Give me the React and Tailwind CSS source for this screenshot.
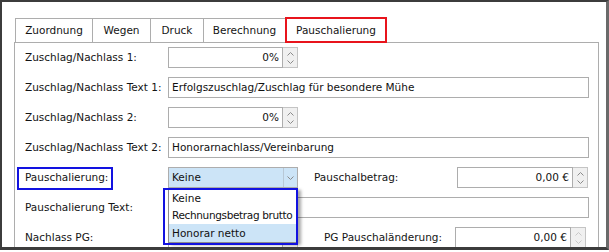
import React from 'react';

const Chevron = ({ dir = 'down', color = '#8a8a8a' }) => (
    <svg width="7" height="4" viewBox="0 0 7 4" className="block">
        <path
            d={dir === 'up' ? 'M0.5 3.5 L3.5 0.5 L6.5 3.5' : 'M0.5 0.5 L3.5 3.5 L6.5 0.5'}
            fill="none"
            stroke={color}
            strokeWidth="1"
        />
    </svg>
);

const Spinner = ({ faded }) => (
    <div className="w-[15px] h-[21px] shrink-0 flex flex-col items-center justify-center gap-[4px] bg-[#f0f0f0] border-y border-r border-[#c4c4c4]">
        <Chevron dir="up" color={faded ? '#c8c8c8' : '#8a8a8a'} />
        <Chevron dir="down" color={faded ? '#c8c8c8' : '#8a8a8a'} />
    </div>
);

const NumberBox = ({ value, width, faded }) => (
    <div className="flex shrink-0">
        <div
            className="h-[21px] border border-[#adadad] bg-white flex items-center justify-end pr-[3px] text-[#111]"
            style={{ width }}
        >
            {value}
        </div>
        <Spinner faded={faded} />
    </div>
);

const TextBox = ({ value = '' }) => (
    <div className="w-[421px] h-[21px] border border-[#adadad] bg-white flex items-center pl-[3px] text-[#111] whitespace-nowrap overflow-hidden">
        {value}
    </div>
);

const Label = ({ children, className = '' }) => (
    <div className={`w-[143px] shrink-0 whitespace-nowrap text-[#141414] ${className}`}>{children}</div>
);

const tabs = [
    { name: 'Zuordnung', w: 'w-[78px]' },
    { name: 'Wegen', w: 'w-[59px]' },
    { name: 'Druck', w: 'w-[54px]' },
    { name: 'Berechnung', w: 'w-[83px]' },
];

export default function App() {
    return (
        <div className="w-[609px] h-[252px] bg-white font-['DejaVu_Sans',sans-serif] text-[10.5px] leading-none">
            <div className="relative w-[609px] h-[250px] border-l-2 border-t-2 border-r-[3px] border-b-[3px] border-l-[#3c3c3c] border-t-[#3c3c3c] border-r-[#6a6a6a] border-b-[#3c3c3c] overflow-hidden pt-[15px] pl-[12px] bg-white">
                {/* tab strip */}
                <div className="flex items-end h-[25px] ml-px">
                    {tabs.map((t, i) => (
                        <div
                            key={t.name}
                            className={`${t.w} h-[24px] ${i > 0 ? '-ml-px' : ''} border border-b-0 border-[#adadad] bg-white flex items-center justify-center text-[#141414]`}
                        >
                            {t.name}
                        </div>
                    ))}
                    <div className="relative z-10 -ml-px -mb-px w-[102px] h-[26px] border-2 border-[#e8141c] bg-white flex items-center justify-center text-[#141414]">
                        Pauschalierung
                    </div>
                </div>

                {/* tab page */}
                <div className="w-[585px] h-[300px] border border-[#adadad] bg-white pt-[4px] pl-[10px] flex flex-col gap-[9px]">
                    <div className="flex items-center h-[21px]">
                        <Label>Zuschlag/Nachlass 1:</Label>
                        <NumberBox value="0%" width={115} />
                    </div>
                    <div className="flex items-center h-[21px]">
                        <Label>Zuschlag/Nachlass Text 1:</Label>
                        <TextBox value="Erfolgszuschlag/Zuschlag für besondere Mühe" />
                    </div>
                    <div className="flex items-center h-[21px]">
                        <Label>Zuschlag/Nachlass 2:</Label>
                        <NumberBox value="0%" width={115} />
                    </div>
                    <div className="flex items-center h-[21px]">
                        <Label>Zuschlag/Nachlass Text 2:</Label>
                        <TextBox value="Honorarnachlass/Vereinbarung" />
                    </div>

                    <div className="relative flex items-center h-[21px]">
                        <span className="absolute left-[-8px] top-0 w-[96px] h-[23px] border-2 border-[#1212e0]" />
                        <Label>Pauschalierung:</Label>
                        <div className="relative z-20 flex shrink-0 w-[130px] h-[21px] border border-[#adadad] bg-[#cce4f7]">
                            <div className="flex-1 flex items-center pl-[3px] text-[#111]">Keine</div>
                            <div className="w-[14px] flex items-center justify-center border-l border-[#b8c8d6]">
                                <Chevron dir="down" />
                            </div>
                            {/* open list */}
                            <div className="absolute left-[-1px] top-[20px] w-[130px] h-[55px] bg-white border border-[#8c8c8c] shadow-[3px_2px_3px_rgba(0,0,0,0.35)] pt-px text-[#111] overflow-hidden">
                                <div className="h-[17px] flex items-center pl-[3px]">Keine</div>
                                <div className="h-[17px] flex items-center pl-[3px] whitespace-nowrap tracking-[-0.35px]">Rechnungsbetrag brutto</div>
                                <div className="h-[18px] flex items-center pl-[3px] bg-[#cce4f7]">Honorar netto</div>
                            </div>
                            <span className="absolute left-[-6px] top-[20px] w-[135px] h-[57px] border-2 border-[#1212e0]" />
                        </div>
                        <Label className="ml-[16px]">Pauschalbetrag:</Label>
                        <NumberBox value="0,00 €" width={116} />
                    </div>

                    <div className="flex items-center h-[21px]">
                        <Label>Pauschalierung Text:</Label>
                        <TextBox />
                    </div>

                    <div className="flex items-center h-[21px]">
                        <Label>Nachlass PG:</Label>
                        <NumberBox value="0,00 €" width={115} />
                        <div className="ml-[26px] w-[131px] shrink-0 whitespace-nowrap text-[#141414]">PG Pauschaländerung:</div>
                        <NumberBox value="0,00 €" width={116} faded />
                    </div>
                </div>
            </div>
        </div>
    );
}
